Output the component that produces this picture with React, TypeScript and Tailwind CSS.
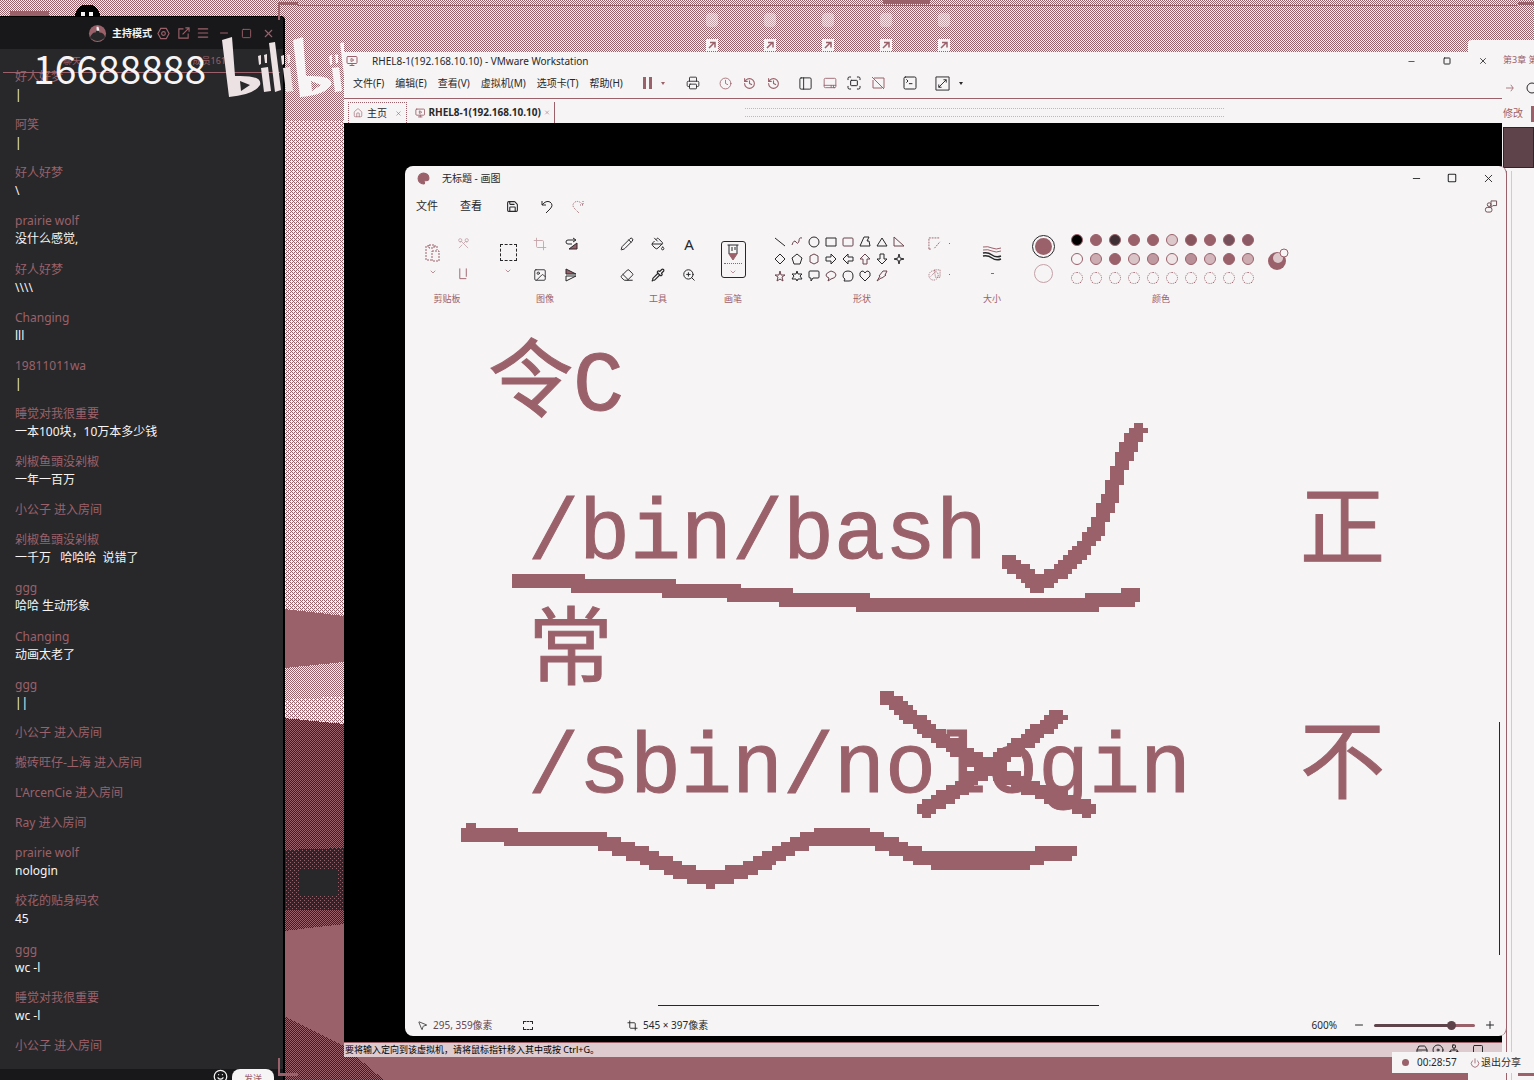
import type { ReactNode } from "react";
import {
  AppWindow, ChevronDown, Circle, Clock, Crop, Eraser, Home, Menu,
  Minus, MousePointer2, PaintBucket, Palette, Pencil, Pipette, Plus, Power, Printer, Save, Scissors,
  Smile, Square, SquareTerminal, X, ZoomIn, History, PanelLeft, Fullscreen, Image, HardDrive, Disc,
  Network, MonitorPlay,
} from "lucide-react";

const ROSE = "#9b616b";
const INK = "#28282a";
const PAPER = "#f6f4f5";

type Message = { name: string; text?: string };

const messages: Message[] = [
  { name: "好人好梦", text: "|" },
  { name: "阿笑", text: "|" },
  { name: "好人好梦", text: "\\" },
  { name: "prairie wolf", text: "没什么感觉," },
  { name: "好人好梦", text: "\\\\\\\\" },
  { name: "Changing", text: "lll" },
  { name: "19811011wa", text: "|" },
  { name: "睡觉对我很重要", text: "一本100块，10万本多少钱" },
  { name: "剁椒鱼頭没剁椒", text: "一年一百万" },
  { name: "小公子 进入房间" },
  { name: "剁椒鱼頭没剁椒", text: "一千万   哈哈哈  说错了" },
  { name: "ggg", text: "哈哈 生动形象" },
  { name: "Changing", text: "动画太老了" },
  { name: "ggg", text: "||" },
  { name: "小公子 进入房间" },
  { name: "搬砖旺仔-上海 进入房间" },
  { name: "L'ArcenCie 进入房间" },
  { name: "Ray 进入房间" },
  { name: "prairie wolf", text: "nologin" },
  { name: "校花的贴身码农", text: "45" },
  { name: "ggg", text: "wc -l" },
  { name: "睡觉对我很重要", text: "wc -l" },
  { name: "小公子 进入房间" },
];

type Pt = [number, number];

/* Turns a polyline into the blocky outline a zoomed-in brush leaves. */
function blocks(points: Pt[], radius = 8, cell = 4.7): string {
  const xs = points.map((p) => p[0]);
  const ys = points.map((p) => p[1]);
  const inside = (x: number, y: number) =>
    points.slice(1).some(([bx, by], i) => {
      const [ax, ay] = points[i];
      const dx = bx - ax;
      const dy = by - ay;
      const t = Math.max(0, Math.min(1, ((x - ax) * dx + (y - ay) * dy) / (dx * dx + dy * dy)));
      return Math.hypot(x - ax - t * dx, y - ay - t * dy) < radius;
    });
  let d = "";
  const r0 = Math.floor((Math.min(...ys) - radius) / cell);
  const r1 = Math.ceil((Math.max(...ys) + radius) / cell);
  const c0 = Math.floor((Math.min(...xs) - radius) / cell);
  const c1 = Math.ceil((Math.max(...xs) + radius) / cell);
  for (let r = r0; r <= r1; r++) {
    let start: number | null = null;
    for (let c = c0; c <= c1 + 1; c++) {
      const on = c <= c1 && inside((c + 0.5) * cell, (r + 0.5) * cell);
      if (on && start === null) start = c;
      if (!on && start !== null) {
        const y = Math.round(r * cell);
        d += `M${Math.round(start * cell)} ${y}H${Math.round(c * cell)}V${Math.round((r + 1) * cell)}H${Math.round(start * cell)}Z`;
        start = null;
      }
    }
  }
  return d;
}

/* Brush strokes, in canvas coordinates. */
const strokes: Pt[][] = [
  [[605, 242], [633, 265], [664, 245], [690, 213], [704, 180], [716, 143], [733, 110]],
  [[483, 378], [515, 403], [552, 430], [602, 457], [632, 470], [682, 489]],
  [[653, 397], [622, 420], [582, 447], [552, 470], [521, 489]],
  [[63, 513], [86, 514], [120, 519], [190, 519], [224, 530], [254, 542], [279, 552], [306, 559], [333, 553], [358, 542], [383, 528], [408, 518], [460, 517], [490, 527], [513, 536], [532, 541], [617, 541], [642, 533], [664, 532]],
];

function Wallpaper() {
  return (
    <svg className="absolute inset-0 h-full w-full" shapeRendering="crispEdges" aria-hidden="true">
      <defs>
        <pattern id="light" width="2" height="2" patternUnits="userSpaceOnUse">
          <rect width="2" height="2" fill={PAPER} />
          <path d="M0 0h1v1H0zM1 1h1v1H1z" fill={ROSE} />
        </pattern>
        <pattern id="pale" width="4" height="4" patternUnits="userSpaceOnUse">
          <rect width="4" height="4" fill={PAPER} />
          <path d="M0 0h1v1H0zM2 2h1v1H2zM2 0h1v1H2zM0 2h1v1H0zM1 1h1v1H1zM3 3h1v1H3z" fill={ROSE} />
        </pattern>
        <pattern id="dusk" width="2" height="2" patternUnits="userSpaceOnUse">
          <rect width="2" height="2" fill={INK} />
          <path d="M0 0h1v1H0zM1 1h1v1H1z" fill={ROSE} />
        </pattern>
        <pattern id="ember" width="4" height="4" patternUnits="userSpaceOnUse">
          <rect width="4" height="4" fill={INK} />
          <path d="M0 0h1v1H0zM2 2h1v1H2z" fill={ROSE} />
        </pattern>
      </defs>
      <rect width="100%" height="100%" fill="url(#light)" />
      <path d="M284 120h60v494l-60-5z" fill="url(#pale)" />
      <path d="M284 609l60 7v464h-60z" fill={ROSE} />
      <path d="M284 668l60-6v64l-60-6z" fill="url(#light)" />
      <path d="M284 700l60-4v28l-60-6z" fill="url(#pale)" />
      <path d="M284 718l60 6v200l-60 7z" fill="url(#dusk)" />
      <path d="M284 850l60-2v62h-60z" fill="url(#ember)" />
      <path d="M300 870h38v26h-38z" fill={INK} />
      <rect x="284" y="1050" width="100%" height="30" fill={ROSE} />
      <path d="M284 1016l60 30 40 34h-100z" fill="url(#dusk)" />
      <path d="M10 11h39v5H10z" fill={ROSE} />
      <path d="M75 16a12 11 0 0 1 25 0z" fill="#000" />
      <path d="M81 12h4v4h-4zM89 12h4v4h-4z" fill={PAPER} />
      <path d="M298 5H1518" stroke={ROSE} />
      <path d="M883 0h47v4h-47z" fill={ROSE} />
    </svg>
  );
}

function Shortcuts() {
  return (
    <div className="absolute left-[706px] top-[13px] flex gap-[46px]">
      {[0, 1, 2, 3, 4].map((i) => (
        <div key={i} className="flex w-3 flex-col gap-3">
          <span className="h-[14px] rounded-sm bg-[#f6f4f5]/40" />
          <svg viewBox="0 0 12 12" className="h-3 w-3 bg-[#f6f4f5]" fill="none" stroke={ROSE} strokeWidth="1.5">
            <path d="M3 9L8 4M4 3.500h5v5" />
          </svg>
        </div>
      ))}
    </div>
  );
}

/* Corner marks that show which part of the desktop is being shared. */
function ShareFrame() {
  return (
    <div className="pointer-events-none absolute inset-y-[2px] left-[278px] right-0">
      <span className="absolute left-0 top-0 h-[18px] w-5 border-l-2 border-t-[3px] border-[#9b616b]" />
      <span className="absolute bottom-[2px] left-0 h-[18px] w-5 border-b-[3px] border-l-2 border-[#9b616b]" />
      <span className="absolute right-0 top-0 h-[3px] w-4 bg-[#9b616b]" />
      <span className="absolute bottom-[2px] right-0 h-[3px] w-4 bg-[#9b616b]" />
    </div>
  );
}

function IconButton({ label, className = "", children }: { label: string; className?: string; children: ReactNode }) {
  return (
    <button type="button" aria-label={label} className={`flex shrink-0 items-center justify-center ${className}`}>
      {children}
    </button>
  );
}

function ChatWindow() {
  return (
    <aside className="absolute bottom-0 left-0 top-4 isolate flex w-[285px] flex-col overflow-hidden rounded-tr border-r-2 border-t border-black bg-[#28282a]">
      <header className="shrink-0">
        <div className="flex h-8 items-center justify-end bg-[#18181a] pr-1 text-[#9b616b]">
          <svg viewBox="0 0 20 20" className="mr-[5px] h-[19px] w-[19px]">
            <circle cx="10" cy="10" r="9" fill={ROSE} />
            <path d="M2 14q3-6 6-5l2-5 2 5q5 0 6 5-8 8-16 0z" fill={INK} />
            <path d="M9 3h2l1 4H9z" fill={PAPER} />
          </svg>
          <span className="w-[41px] whitespace-nowrap text-[10px] font-bold text-[#f6f4f5]">主持模式</span>
          <IconButton label="设置" className="w-5">
            <svg viewBox="0 0 14 14" className="h-[13px] w-[13px]" fill="none" stroke="currentColor" strokeWidth="1.2">
              <path d="M4 1.500h6L13 7l-3 5.500H4L1 7z" />
              <circle cx="7" cy="7" r="2" />
            </svg>
          </IconButton>
          <IconButton label="弹出" className="w-5">
            <svg viewBox="0 0 14 14" className="h-[13px] w-[13px]" fill="none" stroke="currentColor" strokeWidth="1.2">
              <path d="M7 2H2v10h10V7M9 1h4v4M13 1L6 8" />
            </svg>
          </IconButton>
          <IconButton label="菜单" className="w-5"><Menu size={14} strokeWidth={2} /></IconButton>
          <IconButton label="最小化" className="w-[22px]"><Minus size={12} strokeWidth={2} /></IconButton>
          <IconButton label="最大化" className="w-[22px]"><Square size={11} strokeWidth={2} /></IconButton>
          <IconButton label="关闭" className="w-[22px]"><X size={13} strokeWidth={2} /></IconButton>
        </div>
        <div className="mx-[3px] flex h-6 items-center justify-between border-b border-[#9b616b] pl-[60px] pr-[54px] text-[9px] text-[#9b616b]">
          <span>聊天</span>
          <span>成员161</span>
        </div>
      </header>
      <ul className="-mt-[5px] flex min-h-0 flex-1 flex-col justify-between gap-y-1 pb-[14px] pl-[15px] text-[12px] leading-[18px]">
        {messages.map((m, i) => (
          <li key={i} className="whitespace-pre">
            <p className="text-[#9b616b]">{m.name}</p>
            {m.text && <p className="text-[#f6f4f5]">{m.text}</p>}
          </li>
        ))}
      </ul>
      <footer className="flex h-[11px] shrink-0 items-start justify-end gap-1 bg-[#18181a] pr-[9px] text-[#f6f4f5]">
        <IconButton label="表情"><Smile size={15} strokeWidth={2} /></IconButton>
        <button type="button" className="h-5 w-[42px] rounded-lg bg-[#f6f4f5] text-[9px] leading-[16px] text-[#9b616b]">发送</button>
      </footer>
    </aside>
  );
}

function Watermark() {
  const word = (
    <>
      <path d="M1 4L11 1L14 40Q42 39 39 49Q33 59 8 61ZM19 45L20 55L29 49Z" fillRule="evenodd" />
      <path d="M37 20l3-1v9l-2 1zM43 19l3-1v9h-2z" />
      <path d="M40 32l7-1 3 24-7 1z" />
      <path d="M48 7l6-1 6 48-6 2z" />
      <path d="M60 20l3-1v9l-2 1zM66 19l3-1v9h-2z" />
      <path d="M62 32l7-1 3 24-7 1z" />
    </>
  );
  return (
    <div className="pointer-events-none absolute left-[33px] top-9 flex items-center">
      <span className="w-[188px] text-[39px] leading-[62px] text-[#f6f4f5] font-['Noto_Sans_CJK_SC',sans-serif]">16688888</span>
      <svg viewBox="0 0 123 62" className="h-[62px] w-[123px]" aria-label="bilibili">
        <g fill="#ece2e4">{word}</g>
        <g fill={PAPER} transform="translate(71 0)">{word}</g>
      </svg>
    </div>
  );
}

function BrowserWindow() {
  return (
    <section className="absolute bottom-0 right-0 top-10 w-[66px] overflow-hidden rounded-tl bg-[#f6f4f5] pl-[35px] text-[10px] text-[#9b616b]">
      <p className="h-[34px] whitespace-nowrap pt-[13px] text-[9px] leading-[14px]">第3章 第</p>
      <div className="flex h-7 items-center gap-3 pl-[3px]">
        <svg viewBox="0 0 10 10" className="h-2 w-2 shrink-0" fill="none" stroke={ROSE}><path d="M0 5h9M6 1l3 4-3 4" /></svg>
        <Circle size={12} className="shrink-0 text-[#28282a]" />
      </div>
      <div className="flex h-[25px] items-start gap-2 whitespace-nowrap pt-1 leading-[14px]">
        <span>修改</span>
        <span className="h-4 w-2 bg-[#9b616b]" />
      </div>
      <div className="h-[41px] border border-[#28282a] bg-[#5f434a]" />
      <div className="ml-[3px] mt-[3px] h-full w-[6px] border-l border-r border-[#9b616b] border-r-[#d9c8cb]" />
    </section>
  );
}

const menus = ["文件(F)", "编辑(E)", "查看(V)", "虚拟机(M)", "选项卡(T)", "帮助(H)"];

function VmToolbar() {
  return (
    <div className="flex items-center text-[#9b616b]">
      <IconButton label="暂停" className="ml-[17px] w-4"><span className="h-3 w-[9px] border-x-[3px] border-[#9b616b]" /></IconButton>
      <span className="ml-[5px] mr-4 border-x-2 border-t-[3px] border-x-transparent border-t-[#9b616b]" />
      <IconButton label="发送按键" className="w-6 text-[#28282a]"><Printer size={14} strokeWidth={1.5} /></IconButton>
      <IconButton label="快照" className="ml-[9px] w-6"><Clock size={13} strokeWidth={1.5} /></IconButton>
      <IconButton label="恢复快照" className="w-6"><History size={13} strokeWidth={2} /></IconButton>
      <IconButton label="管理快照" className="w-6"><History size={13} strokeWidth={2} /></IconButton>
      <IconButton label="显示侧栏" className="ml-2 w-6 text-[#28282a]"><PanelLeft size={15} strokeWidth={1.5} /></IconButton>
      <IconButton label="显示缩略图" className="w-6"><AppWindow size={14} strokeWidth={1.5} className="rotate-180" /></IconButton>
      <IconButton label="全屏" className="w-6 text-[#28282a]"><Fullscreen size={16} strokeWidth={1.5} /></IconButton>
      <IconButton label="Unity" className="w-6">
        <svg viewBox="0 0 14 14" className="h-[14px] w-[14px]" fill="none" stroke="currentColor"><path d="M3 2h10v10M11 12H2V4M1 1l12 12" /></svg>
      </IconButton>
      <IconButton label="控制台" className="ml-2 w-6 text-[#28282a]"><SquareTerminal size={16} strokeWidth={1.5} /></IconButton>
      <IconButton label="拉伸" className="ml-[9px] w-6 text-[#28282a]">
        <svg viewBox="0 0 16 16" className="h-[15px] w-[15px]" fill="none" stroke="currentColor"><path d="M1 1h14v14H1zM4 12l8-8M9 4h3v3M4 9v3h3" /></svg>
      </IconButton>
      <span className="ml-1 border-x-2 border-t-[3px] border-x-transparent border-t-[#28282a]" />
    </div>
  );
}

function VmWindow() {
  return (
    <main className="absolute bottom-[23px] left-[344px] right-[32px] top-[52px] flex flex-col bg-[#f6f4f5] text-[#28282a]">
      <header className="flex h-[18px] shrink-0 items-center pl-[2px] pr-px">
        <MonitorPlay size={12} strokeWidth={2} className="text-[#9b616b]" />
        <h1 className="ml-[14px] flex-1 text-[10px]">RHEL8-1(192.168.10.10) - VMware Workstation</h1>
        <IconButton label="最小化" className="w-9"><Minus size={9} strokeWidth={2} /></IconButton>
        <IconButton label="最大化" className="w-9"><Square size={8} strokeWidth={3} /></IconButton>
        <IconButton label="关闭" className="w-9"><X size={10} strokeWidth={2} /></IconButton>
      </header>
      <div className="flex h-[28px] shrink-0 items-center pb-[2px] pl-[9px]">
        <nav className="flex gap-[11px] whitespace-nowrap text-[10px]">
          {menus.map((m) => <button key={m} type="button">{m}</button>)}
        </nav>
        <VmToolbar />
      </div>
      <div className="flex h-[25px] shrink-0 items-stretch border-t border-[#9b616b] pl-1 text-[10px]">
        <button type="button" className="mt-[3px] flex w-[59px] items-center gap-1 border-x border-t border-dotted border-[#9b616b] pl-1">
          <Home size={10} strokeWidth={1.5} className="text-[#9b616b]" />主页<X size={7} className="ml-auto mr-1 text-[#9b616b]" />
        </button>
        <button type="button" className="mt-[3px] flex w-[148px] items-center gap-[3px] whitespace-nowrap border-r border-[#9b616b] pl-2 font-bold">
          <MonitorPlay size={12} strokeWidth={2} className="text-[#9b616b]" />RHEL8-1(192.168.10.10)<X size={7} className="ml-auto mr-1 text-[#9b616b]" />
        </button>
        <span className="ml-[190px] mr-[278px] mt-[9px] h-[9px] flex-1 border-y border-dotted border-[#cfb2b7]" />
      </div>
      <div className="flex min-h-0 flex-1 bg-black pb-[6px] pl-[61px] pt-[43px]">
        <PaintWindow />
      </div>
      <footer className="flex h-[15px] shrink-0 items-center justify-between whitespace-nowrap border-t border-[#9b616b] bg-[#ddcbcf] pl-px pr-[18px] text-[9px] text-black">
        <span>要将输入定向到该虚拟机，请将鼠标指针移入其中或按 Ctrl+G。</span>
        <span className="flex gap-1 text-[#28282a]"><HardDrive size={12} /><Disc size={12} /><Network size={12} /><Square size={12} className="ml-2" /></span>
      </footer>
    </main>
  );
}

const shapes = [
  "M1 2l10 8", "M1 9q2-6 4-3t3-1q0-4 3-3", "M6 1a5 5 0 1 1 0 10a5 5 0 1 1 0-10", "M1 2h10v8H1z", "M1 3q0-1 1-1h8q1 0 1 1v6q0 1-1 1H2q-1 0-1-1z", "M5 1h5L8 5h2l1 5H1z", "M6 2l5 8H1z", "M1 1v9h10z",
  "M6 1l5 5-5 5-5-5z", "M6 1l5 4-2 6H3L1 5z", "M6 1l4 2v6l-4 2-4-2V3z", "M1 4h5V1l5 5-5 5V8H1z", "M11 4H6V1L1 6l5 5V8h5z", "M4 11V6H1l5-5 5 5H8v5z", "M4 1v5H1l5 5 5-5H8V1z", "M6 1l1 4 4 1-4 1-1 4-1-4-4-1 4-1z",
  "M6 1l1 4h4L8 7l1 4-3-2-3 2 1-4-3-2h4z", "M6 1l1 3h4L9 6l2 3H7l-1 2-1-2H1l2-3-2-2h4z", "M2 1h8q1 0 1 1v5q0 1-1 1H5l-2 3V8H2Q1 8 1 7V2q0-1 1-1z", "M4 8Q1 7 1 5t5-4q5 1 5 4T6 9l-3 2z", "M6 1q5 0 5 5T7 11H2l1-2Q1 8 1 6q0-5 5-5z", "M6 11L1 6q-1-4 2-5 2 0 3 2 1-2 3-2 3 1 2 5z", "M7 1h4L9 5h1L6 8H5l-4 3 3-5H3z",
];

function Group({ label, className, children }: { label: string; className: string; children: ReactNode }) {
  return (
    <section className={`flex shrink-0 flex-col items-center ${className}`}>
      <div className="flex h-[64px] w-full items-center justify-center">{children}</div>
      <h2 className="pt-px text-[9px] leading-[14px] text-[#9b616b]">{label}</h2>
    </section>
  );
}

const swatches = [
  "bg-black", "bg-[#9b616b]", "bg-[#3d2f33]", "bg-[#9b616b]", "bg-[#9b616b]", "bg-[#dcc8cb]", "bg-[#88555e]", "bg-[#9b616b]", "bg-[#75505a]", "bg-[#8c5a64]",
  "bg-[#f6f4f5]", "bg-[#ccacb1]", "bg-[#9b616b]", "bg-[#d9c4c8]", "bg-[#c09aa1]", "bg-[#eee4e6]", "bg-[#ba9098]", "bg-[#d2b6bb]", "bg-[#9b616b]", "bg-[#ccacb1]",
];

function Ribbon() {
  return (
    <div className="flex h-[98px] shrink-0 pl-[3px] pt-[5px] text-[#28282a]">
      <Group label="剪贴板" className="w-[78px]">
        <div className="flex items-center gap-4 text-[#c3a1a7]">
          <IconButton label="粘贴" className="flex-col gap-[6px] pt-[2px]">
            <svg viewBox="0 0 16 18" className="h-[18px] w-4" fill="none" stroke={ROSE} strokeDasharray="2 1"><path d="M4 2H1v14h5M4 1h5v3H4zM9 2h3v4M7 7h7v10H7z" /></svg>
            <ChevronDown size={8} className="text-[#9b616b]" />
          </IconButton>
          <div className="flex flex-col gap-[17px]">
            <IconButton label="剪切"><Scissors size={13} strokeWidth={1.5} className="rotate-90" /></IconButton>
            <IconButton label="复制"><svg viewBox="0 0 14 14" className="h-[14px] w-[13px]" fill="none" stroke={ROSE}><path d="M3 1v11h7M10 1v9" /></svg></IconButton>
          </div>
        </div>
      </Group>
      <Group label="图像" className="w-[118px]">
        <div className="flex items-center pr-3">
          <IconButton label="选择" className="w-8 flex-col gap-[6px]">
            <span className="h-[17px] w-[17px] border border-dashed border-[#28282a]" /><ChevronDown size={8} className="text-[#9b616b]" />
          </IconButton>
          <div className="grid grid-cols-2 gap-y-[17px]">
            <IconButton label="裁剪" className="w-[31px]"><Crop size={14} strokeWidth={1.5} className="text-[#c3a1a7]" /></IconButton>
            <IconButton label="旋转" className="w-[31px]"><svg viewBox="0 0 14 14" className="h-[14px] w-[14px]" fill="none" stroke="currentColor"><path d="M11 3H4a2 2 0 0 0 0 4h4M9 1l3 2-3 2" /><path d="M13 6v6H5z" fill={ROSE} /></svg></IconButton>
            <IconButton label="移除背景" className="w-[31px]"><Image size={14} strokeWidth={1.5} /></IconButton>
            <IconButton label="翻转" className="w-[31px]"><svg viewBox="0 0 14 14" className="h-[14px] w-[14px]" stroke="currentColor"><path d="M2 1v5h10z" fill={ROSE} /><path d="M2 13V8h10z" fill="none" /></svg></IconButton>
          </div>
        </div>
      </Group>
      <Group label="工具" className="w-[108px]">
        <div className="grid grid-cols-3 gap-y-[17px]">
          <IconButton label="铅笔" className="w-[31px]"><Pencil size={14} strokeWidth={1.7} /></IconButton>
          <IconButton label="填充" className="w-[31px]"><PaintBucket size={14} strokeWidth={1.7} /></IconButton>
          <IconButton label="文本" className="w-[31px] text-[15px] leading-[14px]">A</IconButton>
          <IconButton label="橡皮擦" className="w-[31px]"><Eraser size={14} strokeWidth={1.7} /></IconButton>
          <IconButton label="取色器" className="w-[31px]"><Pipette size={14} strokeWidth={2} /></IconButton>
          <IconButton label="放大镜" className="w-[31px]"><ZoomIn size={14} strokeWidth={1.7} /></IconButton>
        </div>
      </Group>
      <Group label="画笔" className="w-[42px]">
        <IconButton label="画笔" className="h-[37px] w-[25px] flex-col rounded-[3px] border border-[#28282a]">
          <svg viewBox="0 0 14 20" className="h-5 w-[14px]" fill="none" stroke={INK}>
            <path d="M1.500 2h11M3 2v9h8V2M6 4v4M9 4v3" />
            <path d="M3 11h8l-4 6z" fill={ROSE} stroke={ROSE} />
          </svg>
          <span className="w-[18px] border-t border-dotted border-[#9b616b]" />
          <ChevronDown size={8} className="mt-1 text-[#9b616b]" />
        </IconButton>
      </Group>
      <Group label="形状" className="w-[216px]">
        <div className="grid grid-cols-8 gap-x-[5px] gap-y-[5px]">
          {shapes.map((d, i) => (
            <IconButton key={i} label={`形状 ${i + 1}`}>
              <svg viewBox="0 0 12 12" className="h-3 w-3" fill="none" stroke={i % 3 === 1 ? "#6b454d" : INK}><path d={d} /></svg>
            </IconButton>
          ))}
        </div>
        <div className="ml-[23px] flex flex-col gap-[18px]">
          <IconButton label="形状轮廓" className="gap-2"><svg viewBox="0 0 14 14" className="h-[13px] w-[13px]" fill="none" stroke={ROSE} strokeDasharray="2 1"><path d="M1 13V1h12M7 12l6-7M1 13h3" /></svg><span className="h-px w-px bg-[#9b616b]" /></IconButton>
          <IconButton label="形状填充" className="gap-2"><svg viewBox="0 0 14 14" className="h-[13px] w-[13px]" fill="none" stroke={ROSE} strokeDasharray="1 1"><circle cx="6" cy="8" r="5" /><path d="M7 2h6v8H8zM3 9l5-5" /></svg><span className="h-px w-px bg-[#9b616b]" /></IconButton>
        </div>
      </Group>
      <Group label="大小" className="w-[44px]">
        <IconButton label="大小" className="flex-col gap-3">
          <svg viewBox="0 0 20 16" className="h-4 w-5" fill="none" stroke={INK}>
            <path d="M1 2q5-1 9 1t9 0M1 5q5-1 9 1t9 0" stroke={ROSE} />
            <path d="M1 8q5-1 9 2t9 1M1 11q5-1 9 2t9 1" strokeWidth="1.500" />
          </svg>
          <span className="h-px w-[3px] bg-[#9b616b]" />
        </IconButton>
      </Group>
      <Group label="颜色" className="w-[294px]">
        <div className="flex w-[22px] flex-col items-center gap-[6px]">
          <IconButton label="颜色 1" className="h-[23px] w-[23px] rounded-full border border-[#28282a] p-[2px]"><span className="h-full w-full rounded-full bg-[#9b616b]" /></IconButton>
          <button type="button" aria-label="颜色 2" className="h-[19px] w-[19px] rounded-full border border-[#c3a1a7]" />
        </div>
        <div className="ml-4 grid grid-cols-10 gap-[7px]">
          {swatches.map((c, i) => (
            <button key={i} type="button" aria-label={`色板 ${i + 1}`} className={`h-3 w-3 rounded-full border border-[#9b616b] ${c}`} />
          ))}
          {swatches.slice(0, 10).map((c, i) => (
            <button key={c + i} type="button" aria-label={`自定义颜色 ${i + 1}`} className="h-3 w-3 rounded-full border border-dotted border-[#9b616b]" />
          ))}
        </div>
        <IconButton label="编辑颜色" className="ml-3">
          <svg viewBox="0 0 24 24" className="h-6 w-6">
            <circle cx="11" cy="14" r="9" fill={ROSE} />
            <circle cx="12" cy="11" r="5" fill="#dcc8cb" />
            <circle cx="18" cy="6" r="4" fill={PAPER} stroke={ROSE} />
          </svg>
        </IconButton>
      </Group>
    </div>
  );
}

function Canvas() {
  return (
    <div className="relative min-h-0 flex-1 overflow-hidden font-['Liberation_Mono','Noto_Sans_CJK_SC',monospace] text-[85px] leading-[85px] text-[#9b616b] [-webkit-text-stroke:1px_#9b616b]">
      <p className="absolute left-[83px] top-[25px] whitespace-pre">令C</p>
      <p className="absolute left-[123px] top-[173px] whitespace-pre">/bin/bash</p>
      <p className="absolute left-[895px] top-[173px]">正</p>
      <p className="absolute left-[123px] top-[293px]">常</p>
      <p className="absolute left-[123px] top-[407px] whitespace-pre">/sbin/nologin</p>
      <p className="absolute left-[895px] top-[407px]">不</p>
      <svg className="absolute inset-0 h-full w-full" shapeRendering="crispEdges" aria-hidden="true">
        {strokes.map((s, i) => <path key={i} d={blocks(s)} fill={ROSE} />)}
        <path d="M107 261H173V266H264V271H329V275H381V280H458V285H687V280H723V275H735" fill="none" stroke={ROSE} strokeWidth="14" />
      </svg>
      <span className="absolute bottom-1 left-[253px] right-[407px] h-px bg-[#28282a]" />
      <span className="absolute bottom-[55px] right-[6px] top-[402px] w-px bg-[#28282a]" />
    </div>
  );
}

function PaintWindow() {
  return (
    <section className="z-10 -mr-[5px] flex min-w-0 flex-1 flex-col rounded-lg border-r border-[#9b616b] bg-[#f6f4f5]">
      <header className="flex h-6 shrink-0 items-center pl-3">
        <Palette size={13} strokeWidth={2} className="fill-[#9b616b] text-[#9b616b]" />
        <h2 className="ml-3 flex-1 text-[10px]">无标题 - 画图</h2>
        <IconButton label="最小化" className="w-9"><Minus size={11} strokeWidth={2} /></IconButton>
        <IconButton label="最大化" className="w-9"><Square size={10} strokeWidth={2.5} /></IconButton>
        <IconButton label="关闭" className="w-9"><X size={13} strokeWidth={1.7} /></IconButton>
      </header>
      <div className="flex h-8 shrink-0 items-center pl-[11px] pr-2 text-[11px]">
        <button type="button" className="mr-[22px]">文件</button>
        <button type="button" className="mr-6">查看</button>
        <IconButton label="保存" className="w-3"><Save size={13} strokeWidth={2} className="shrink-0" /></IconButton>
        <IconButton label="撤销" className="ml-[23px] w-3">
          <svg viewBox="0 0 12 13" className="h-[13px] w-3" fill="none" stroke="currentColor"><path d="M1 1v4h4M1 5q4-5 8-3 4 3 0 7l-4 4" /></svg>
        </IconButton>
        <IconButton label="重做" className="ml-[19px] w-3">
          <svg viewBox="0 0 12 13" className="h-[13px] w-3" fill="none" stroke={ROSE} strokeDasharray="1 1"><path d="M11 1v4H7M11 5Q7 0 3 2q-4 3 0 7l4 4" /></svg>
        </IconButton>
        <IconButton label="共享" className="ml-auto">
          <svg viewBox="0 0 14 14" className="h-[13px] w-[14px]" fill="none" stroke="#6b454d"><circle cx="5" cy="5" r="2" /><rect x="1" y="8" width="7" height="5" rx="2" /><path d="M7 1h6v5H9L7 8z" /></svg>
        </IconButton>
      </div>
      <Ribbon />
      <Canvas />
      <footer className="flex h-[26px] shrink-0 items-center pl-3 pr-[10px] pt-1 text-[10px]">
        <MousePointer2 size={11} strokeWidth={1.7} />
        <span className="ml-[5px] w-[90px] text-[#6b454d]">295, 359像素</span>
        <span className="h-[9px] w-[10px] border border-dashed border-[#28282a]" />
        <Crop size={11} className="ml-[94px]" />
        <span className="ml-[5px] flex-1">545 × 397像素</span>
        <label htmlFor="zoom" className="mr-4">600%</label>
        <IconButton label="缩小"><Minus size={12} strokeWidth={2} /></IconButton>
        <input
          id="zoom"
          type="range"
          min={0}
          max={100}
          defaultValue={79}
          className="mx-[9px] h-[3px] w-[101px] appearance-none rounded bg-linear-to-r from-[#5f434a] from-78% to-[#9b616b] to-78% [&::-webkit-slider-thumb]:h-[9px] [&::-webkit-slider-thumb]:w-[9px] [&::-webkit-slider-thumb]:appearance-none [&::-webkit-slider-thumb]:rounded-full [&::-webkit-slider-thumb]:bg-[#5f434a]"
        />
        <IconButton label="放大"><Plus size={12} strokeWidth={2} /></IconButton>
      </footer>
    </section>
  );
}

function ShareToolbar() {
  return (
    <div className="absolute bottom-[7px] right-[10px] flex h-[21px] w-[132px] items-center whitespace-nowrap bg-[#f6f4f5] pl-[10px] text-[10px] text-[#28282a]">
      <span className="h-[7px] w-[7px] rounded-full bg-[#9b616b]" />
      <time className="ml-2 flex-1">00:28:57</time>
      <button type="button" className="flex items-center pr-[3px]"><Power size={10} className="mr-px text-[#9b616b]" />退出分享</button>
    </div>
  );
}

export default function App() {
  return (
    <div className="relative h-screen overflow-hidden bg-[#c9abb0] font-['Noto_Sans','Noto_Sans_CJK_SC',sans-serif]">
      <Wallpaper />
      <Shortcuts />
      <BrowserWindow />
      <ChatWindow />
      <ShareFrame />
      <Watermark />
      <VmWindow />
      <ShareToolbar />
    </div>
  );
}
